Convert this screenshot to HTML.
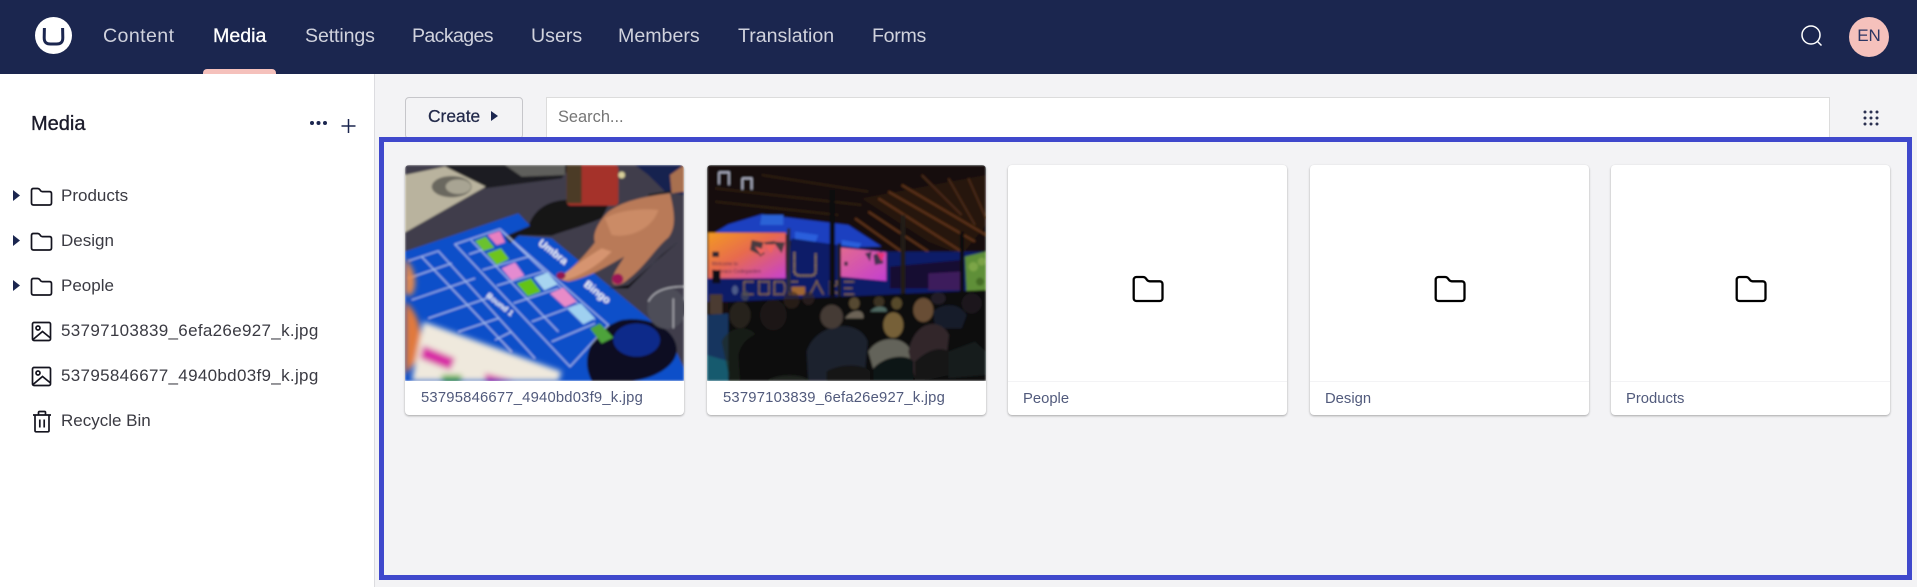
<!DOCTYPE html>
<html lang="en">
<head>
<meta charset="utf-8">
<title>Media</title>
<style>
*{box-sizing:border-box}
html,body{margin:0;padding:0}
body{width:1917px;height:587px;position:relative;overflow:hidden;background:#f3f3f5;font-family:"Liberation Sans",sans-serif}
header{position:absolute;left:0;top:0;width:1917px;height:74px;background:#1b264f}
header a{position:absolute;top:22px;line-height:28px;font-size:19.6px;color:#d0d2dd;text-decoration:none;white-space:nowrap}
header a.on{color:#fff;-webkit-text-stroke:.3px #fff}
.ind{position:absolute;left:203px;top:69px;width:73px;height:5px;background:#f5c1bc;border-radius:4px 4px 0 0}
.en{position:absolute;left:1849px;top:17px;width:40px;height:40px;border-radius:50%;background:#f5c1bc;color:#2b3563;font-size:17px;line-height:37px;text-align:center}
aside{position:absolute;left:0;top:74px;width:375px;height:513px;background:#fff;border-right:1px solid #dcdce0}
aside h1{position:absolute;left:31px;top:37px;margin:0;font-size:20px;line-height:26px;font-weight:400;color:#1b1b2a;-webkit-text-stroke:.35px #1b1b2a}
.row{position:absolute;left:61px;font-size:17px;line-height:24px;color:#3a3a42;white-space:nowrap}
.row.file{letter-spacing:.32px}
.ic{position:absolute}
.create{position:absolute;left:405px;top:97px;width:118px;height:42px;background:#f3f3f5;border:1px solid #c6c6ca;border-radius:4px}
.create span{position:absolute;left:22px;top:6px;font-size:17.4px;line-height:24px;color:#22294a;-webkit-text-stroke:.25px #22294a}
.create i{position:absolute;left:85px;top:13px;width:0;height:0;border-left:7px solid #1b264f;border-top:5px solid transparent;border-bottom:5px solid transparent}
.search{position:absolute;left:546px;top:97px;width:1284px;height:42px;background:#fff;border:1px solid #dcdcdc;border-top-width:1.5px;padding:7px 11px;font-size:16.4px;line-height:24px;color:#757575}
.frame{position:absolute;left:379px;top:137px;width:1533px;height:443px;border:5px solid #3f48cc;z-index:5}
.card{position:absolute;top:165px;width:279px;height:250px;background:#fff;border-radius:4px;box-shadow:0 1px 2px rgba(0,0,0,.32);overflow:hidden}
.card svg.ph{position:absolute;left:0;top:0;width:279px;height:216px;display:block}
.card .lb{position:absolute;left:16px;top:216px;right:0;height:34px;line-height:34px;font-size:14.8px;color:#515a7c;white-space:nowrap}
.card .lb.file{letter-spacing:.2px}
.card.f .lb{border-top:1px solid #f3f3f5;left:0;padding-left:15px}
.card .fd{position:absolute;left:124px;top:110px}
</style>
</head>
<body>
<header>
<svg class="ic" style="left:35px;top:17px" width="37" height="37" viewBox="0 0 37 37"><circle cx="18.500" cy="18.500" r="18.500" fill="#fff"/><path d="M9.400 11 9.200 20.500C9.100 25.500 11.500 27 15.500 27h6c4 0 6.400-1.500 6.300-6.500L27.600 11" fill="none" stroke="#1b264f" stroke-width="3"/></svg>
<a style="left:103px;letter-spacing:.4px">Content</a>
<a class="on" style="left:213px">Media</a>
<a style="left:305px;letter-spacing:-.12px">Settings</a>
<a style="left:412px;letter-spacing:-.65px">Packages</a>
<a style="left:531px">Users</a>
<a style="left:618px">Members</a>
<a style="left:738px">Translation</a>
<a style="left:872px;letter-spacing:-.3px">Forms</a>
<div class="ind"></div>
<svg class="ic" style="left:1800px;top:24px" width="24" height="24" viewBox="0 0 24 24" fill="none" stroke="#fff" stroke-width="1.500"><circle cx="11" cy="11" r="9"/><path d="m17.500 17.500 4 4"/></svg>
<div class="en">EN</div>
</header>

<aside>
<h1>Media</h1>
<svg class="ic" style="left:309px;top:46px" width="19" height="6" viewBox="0 0 19 6" fill="#1b264f"><circle cx="3" cy="3" r="2"/><circle cx="9.500" cy="3" r="2"/><circle cx="16" cy="3" r="2"/></svg>
<svg class="ic" style="left:341px;top:44px" width="15" height="16" viewBox="0 0 15 16" stroke="#1b264f" stroke-width="1.500"><path d="M7.500 1v14M.5 8h14"/></svg>

<svg class="ic" style="left:13px;top:116px" width="8" height="11"><path d="M0 0 7 5.500 0 11z" fill="#1b264f"/></svg>
<svg class="ic" style="left:30px;top:113px" width="23" height="19" viewBox="0 0 23 19"><path d="M3.500 1.500h4.200c1 0 1.600.4 2.200 1.200l.6.900c.5.700 1 1 1.900 1h7.100c1.200 0 2 .8 2 2v9.400c0 1.200-.8 2-2 2h-16c-1.200 0-2-.8-2-2V3.500c0-1.200.8-2 2-2z" fill="none" stroke="#14141f" stroke-width="1.700"/></svg>
<div class="row" style="top:110px">Products</div>

<svg class="ic" style="left:13px;top:161px" width="8" height="11"><path d="M0 0 7 5.500 0 11z" fill="#1b264f"/></svg>
<svg class="ic" style="left:30px;top:158px" width="23" height="19" viewBox="0 0 23 19"><path d="M3.500 1.500h4.200c1 0 1.600.4 2.200 1.200l.6.900c.5.700 1 1 1.900 1h7.100c1.200 0 2 .8 2 2v9.400c0 1.200-.8 2-2 2h-16c-1.200 0-2-.8-2-2V3.500c0-1.200.8-2 2-2z" fill="none" stroke="#14141f" stroke-width="1.700"/></svg>
<div class="row" style="top:155px">Design</div>

<svg class="ic" style="left:13px;top:206px" width="8" height="11"><path d="M0 0 7 5.500 0 11z" fill="#1b264f"/></svg>
<svg class="ic" style="left:30px;top:203px" width="23" height="19" viewBox="0 0 23 19"><path d="M3.500 1.500h4.200c1 0 1.600.4 2.200 1.200l.6.900c.5.700 1 1 1.900 1h7.100c1.200 0 2 .8 2 2v9.400c0 1.200-.8 2-2 2h-16c-1.200 0-2-.8-2-2V3.500c0-1.200.8-2 2-2z" fill="none" stroke="#14141f" stroke-width="1.700"/></svg>
<div class="row" style="top:200px">People</div>

<svg class="ic" style="left:31px;top:247px" width="21" height="21" viewBox="0 0 21 21" fill="none" stroke="#14141f" stroke-width="1.700"><rect x="1.500" y="1.500" width="18" height="18" rx="1.500"/><circle cx="7" cy="7" r="2"/><path d="m2 18.500 9.500-8 8 6.500"/></svg>
<div class="row file" style="top:245px">53797103839_6efa26e927_k.jpg</div>

<svg class="ic" style="left:31px;top:292px" width="21" height="21" viewBox="0 0 21 21" fill="none" stroke="#14141f" stroke-width="1.700"><rect x="1.500" y="1.500" width="18" height="18" rx="1.500"/><circle cx="7" cy="7" r="2"/><path d="m2 18.500 9.500-8 8 6.500"/></svg>
<div class="row file" style="top:290px">53795846677_4940bd03f9_k.jpg</div>

<svg class="ic" style="left:32px;top:336px" width="20" height="23" viewBox="0 0 20 23" fill="none" stroke="#14141f" stroke-width="1.700"><path d="M1 5h18M6.500 5V2.500c0-.7.4-1 1-1h5c.6 0 1 .3 1 1V5M3 5v15.500c0 .8.500 1.300 1.200 1.300h11.600c.7 0 1.200-.5 1.200-1.300V5M7.800 9.500v8M12.200 9.500v8"/></svg>
<div class="row" style="top:335px">Recycle Bin</div>
</aside>

<div class="create"><span>Create</span><i></i></div>
<div class="search">Search...</div>
<svg class="ic" style="left:1863px;top:110px" width="16" height="16" fill="#2a3050"><circle cx="2" cy="2" r="1.500"/><circle cx="8" cy="2" r="1.500"/><circle cx="14" cy="2" r="1.500"/><circle cx="2" cy="8" r="1.500"/><circle cx="8" cy="8" r="1.500"/><circle cx="14" cy="8" r="1.500"/><circle cx="2" cy="14" r="1.500"/><circle cx="8" cy="14" r="1.500"/><circle cx="14" cy="14" r="1.500"/></svg>

<div class="frame"></div>

<!-- Card 1 -->
<div class="card" style="left:405px">
<svg class="ph" viewBox="30 30 837 648" preserveAspectRatio="none">
<defs><filter id="b1" x="-5%" y="-5%" width="110%" height="110%"><feGaussianBlur stdDeviation="3.500"/></filter><filter id="b2"><feGaussianBlur stdDeviation="9"/></filter></defs>
<g filter="url(#b1)">
<rect x="30" y="30" width="837" height="648" fill="#3f3e4c"/>
<path d="M150 30H530L500 70 270 100 180 60z" fill="#1c1b21"/>
<path d="M330 30H510V60L380 65z" fill="#5f5e5c"/>
<path d="M720 30H867V120L810 110 760 60z" fill="#17214f"/>
<path d="M30 60 150 35 272 95 30 232z" fill="#b9b39e"/>
<ellipse cx="170" cy="95" rx="60" ry="32" fill="#6a685e"/>
<ellipse cx="190" cy="95" rx="38" ry="22" fill="#a8a493"/>
<path d="M400 215C420 150 480 130 540 135L640 150 620 190C560 215 500 230 470 242L340 240z" fill="#131217"/>
<rect x="515" y="30" width="155" height="122" rx="12" fill="#a5302a"/>
<rect x="515" y="30" width="45" height="115" fill="#4b3a26"/>
<circle cx="680" cy="60" r="10" fill="#d8cf9a"/>
<path d="M30 290 370 175 405 212 340 240 470 250 760 490 830 560 867 640 867 678H30z" fill="#0d4fc9"/>
<path d="M330 245C370 225 395 220 405 212L345 265z" fill="#15141c"/>
<path d="M590 678C550 600 600 520 680 495 770 480 850 530 845 590 840 640 760 678 700 678z" fill="#0a0e20"/>
<ellipse cx="725" cy="555" rx="70" ry="50" fill="#0b2a8a"/>
<g stroke="#c4d2f4" stroke-width="3.500" fill="none" opacity=".85">
<path d="M180 268 315 222 365 268 640 510 525 635 180 268z"/>
<path d="M222 298 275 280M262 345 400 305M305 392 445 350M355 445 490 400M410 500 545 450M470 560 600 505"/>
<path d="M228 255 490 530M320 228 600 495"/>
<path d="M40 318 130 288 420 610M80 305 350 590M40 370 170 325M50 435 240 370M100 490 290 425M190 530 310 490M300 555 350 530"/>
</g>
<g>
<path d="M240 258 272 245 298 278 265 288z" fill="#6bc22e"/>
<path d="M275 295 318 280 342 312 305 330z" fill="#6ec41c"/>
<path d="M278 240 315 228 330 262 305 270z" fill="#e87fc0"/>
<path d="M320 340 360 322 388 362 350 376z" fill="#e48bd0"/>
<path d="M365 385 408 370 438 410 398 424z" fill="#63c319"/>
<path d="M417 368 458 352 488 388 448 406z" fill="#a7d4f0"/>
<path d="M465 415 505 398 545 440 510 456z" fill="#e88bc8"/>
<path d="M518 462 558 445 600 490 565 508z" fill="#9fd0f0"/>
<path d="M585 520 615 505 655 548 620 565z" fill="#4da33a"/>
</g>
<path d="M480 375 640 400 700 390 850 260 800 300 700 400 640 400z" fill="#09080c"/>
<path d="M490 372C530 345 570 300 600 262 590 235 615 195 640 170 680 140 740 125 825 115 838 170 845 215 820 248 785 275 750 335 700 372 680 392 655 395 652 380 650 360 670 335 688 305 640 330 590 365 520 380z" fill="#b97a58"/>
<path d="M630 190C670 165 740 160 790 165 770 225 700 250 650 240z" fill="#cb8b66"/>
<path d="M490 370C530 340 570 310 620 280L650 290C600 340 550 365 510 375z" fill="#d69470"/>
<ellipse cx="498" cy="362" rx="14" ry="11" fill="#92134f"/>
<ellipse cx="668" cy="372" rx="17" ry="16" fill="#9c1757"/>
<path d="M760 120 840 108" stroke="#1a1a1c" stroke-width="5"/>
<path d="M825 60 867 30V110L830 115z" fill="#a86f4f"/>
<ellipse cx="815" cy="460" rx="58" ry="62" fill="#4e4d58"/>
<path d="M760 440C780 400 830 395 867 395M835 430V520" stroke="#c9c9cf" stroke-width="3" fill="none"/>
<text x="428" y="268" font-family="Liberation Sans,sans-serif" font-weight="700" font-size="32" fill="#fff" transform="rotate(38 428 268)">Umbra</text>
<text x="565" y="392" font-family="Liberation Sans,sans-serif" font-weight="700" font-size="32" fill="#fff" transform="rotate(38 565 392)">Bingo</text>
<text x="272" y="425" font-family="Liberation Sans,sans-serif" font-weight="700" font-size="24" fill="#fff" transform="rotate(38 272 425)">Round 1</text>
</g>
<g filter="url(#b2)">
<path d="M30 310C60 340 70 390 50 420L30 420z" fill="#e58a4e"/>
<path d="M30 440C70 470 90 540 70 610L30 660z" fill="#e0793d"/>
<path d="M85 500 500 650 490 678H50z" fill="#efe9dd"/>
<path d="M85 572 180 610 165 645 75 610z" fill="#d829a5"/>
<path d="M270 655 360 678H270z" fill="#d92ca8"/>
<path d="M140 660H200V678H140z" fill="#5fb02a"/>
</g>
</svg>
<div class="lb file">53795846677_4940bd03f9_k.jpg</div>
</div>

<!-- Card 2 -->
<div class="card" style="left:707px">
<svg class="ph" viewBox="36 30 837 648" preserveAspectRatio="none">
<defs>
<linearGradient id="s1" x1="0" y1="0" x2="1" y2="1"><stop offset="0" stop-color="#f39a22"/><stop offset=".45" stop-color="#e76a4e"/><stop offset="1" stop-color="#c742cf"/></linearGradient>
<linearGradient id="s2" x1="0" y1="0" x2="1" y2="1"><stop offset="0" stop-color="#e26a90"/><stop offset="1" stop-color="#c43ed0"/></linearGradient>
<filter id="c1" x="-5%" y="-5%" width="110%" height="110%"><feGaussianBlur stdDeviation="3.500"/></filter>
</defs>
<g filter="url(#c1)">
<rect x="36" y="30" width="837" height="648" fill="#120e0c"/>
<path d="M500 130 873 60V210L800 300 700 260z" fill="#26150d"/>
<g stroke="#5c3217" stroke-width="7" fill="none"><path d="M550 130 800 290M520 170 700 290M580 110 840 260M620 90 873 240M480 190 620 290"/></g>
<g stroke="#4a2a15" stroke-width="6" fill="none"><path d="M680 60 800 180M760 70 840 210M820 70 873 190"/></g>
<g stroke="#33200f" stroke-width="5" fill="none"><path d="M60 100 500 150M60 140 430 180M200 60 520 110"/></g>
<path d="M72 52h30v38M72 52v36M142 70h28v34M142 70v34" stroke="#c8cbe0" stroke-width="4" fill="none"/>
<path d="M60 232 100 208 200 178 300 190 460 210 560 275 430 278 290 260 270 232z" fill="#1a3fc0"/>
<path d="M200 180H265V210H195z" fill="#2a62d6"/>
<path d="M300 230 370 240 360 265 300 255zM440 255 500 265 490 280 440 275z" fill="#2a5fdc"/>
<path d="M36 370H273L290 250 430 270 580 290 870 290 873 440H36z" fill="#0e1c68"/>
<path d="M585 335 800 315V400H585z" fill="#160d30"/>
<path d="M700 355 795 350V405H700z" fill="#3e1a5c"/>
<rect x="40" y="233" width="232" height="137" fill="url(#s1)"/>
<path d="M170 255 205 262 195 300 165 285zM205 262 240 258 232 285zM235 260 270 262 260 295zM185 280 210 295 195 305z" fill="#4a3a40"/>
<path d="M210 268 240 268 228 295zM180 275 210 285 198 300z" fill="#f0645e"/>
<path d="M438 278 574 292 574 378 438 365z" fill="url(#s2)"/>
<path d="M510 295 530 290 525 320zM535 300 560 290 565 325 540 330z" fill="#43304f"/>
<path d="M545 292 570 295 560 320z" fill="#e8327a"/>
<rect x="52" y="290" width="20" height="16" fill="#2a2530"/>
<rect x="448" y="320" width="10" height="12" fill="#3a2a40"/>
<text x="50" y="332" font-family="Liberation Sans,sans-serif" font-size="15" fill="#5a2a4a">Welcome to</text>
<text x="50" y="354" font-family="Liberation Sans,sans-serif" font-size="15" fill="#5a2a4a">Umbraco Codegarden</text>
<path d="M298 292V348Q298 362 320 362H345Q362 362 362 348V296" stroke="#b8963a" stroke-width="6" stroke-dasharray="4 4" fill="none"/>
<g stroke="#a07c2a" stroke-width="5" stroke-dasharray="4 3" fill="none"><path d="M175 380H147V418H175M192 380H222V418H192zM238 380V418H265Q275 400 265 380zM283 380V418M283 380H310M283 400H305M283 418H310M345 418 365 380 385 418M405 418V380H425Q432 392 405 398L430 418M448 380H478M448 400H472M448 418H478"/></g>
<rect x="404" y="105" width="16" height="320" fill="#0a0a0c"/>
<rect x="276" y="220" width="10" height="190" fill="#2a2a3a"/>
<rect x="428" y="265" width="10" height="160" fill="#1c1a28"/>
<rect x="617" y="180" width="14" height="240" fill="#201b18"/>
<rect x="795" y="230" width="12" height="190" fill="#0e0e0e"/>
<path d="M810 305 873 290V415H815z" fill="#5f8f38"/>
<circle cx="835" cy="335" r="14" fill="#7ca547"/><circle cx="860" cy="320" r="12" fill="#7ca346"/><circle cx="855" cy="380" r="12" fill="#456d26"/>
<rect x="44" y="418" width="38" height="60" fill="#4b3a32"/>
<rect x="52" y="345" width="24" height="40" fill="#111116"/>
<rect x="290" y="395" width="40" height="25" fill="#a06630"/>
<path d="M36 480 100 475 108 678H36z" fill="#16345e"/>
<path d="M36 600 105 620 108 678H36z" fill="#155a6e"/>
<path d="M100 440 873 405V678H100z" fill="#0b0c0e"/>
<g opacity=".6">
<ellipse cx="120" cy="405" rx="9" ry="14" fill="#7a86a0"/>
<ellipse cx="150" cy="422" rx="12" ry="16" fill="#555"/>
<ellipse cx="290" cy="435" rx="24" ry="26" fill="#3a2a20"/>
<ellipse cx="340" cy="430" rx="18" ry="20" fill="#3a2a22"/>
<ellipse cx="478" cy="445" rx="16" ry="18" fill="#8a7048"/>
<path d="M450 490C470 460 510 460 505 490z" fill="#ad9f86"/>
<ellipse cx="552" cy="440" rx="16" ry="16" fill="#5a4834"/>
<path d="M525 470C545 445 580 455 575 470z" fill="#7fa79a"/>
<ellipse cx="605" cy="445" rx="16" ry="18" fill="#8a7040"/>
<ellipse cx="730" cy="430" rx="22" ry="18" fill="#2e2638"/>
<path d="M715 470C740 445 790 440 815 480L800 520H720z" fill="#1e2a40"/>
<ellipse cx="830" cy="445" rx="30" ry="30" fill="#242228"/>
<ellipse cx="135" cy="480" rx="32" ry="40" fill="#3c3326"/>
<path d="M80 560C100 510 170 510 185 545V678H105z" fill="#222b1c"/>
<ellipse cx="235" cy="480" rx="40" ry="46" fill="#241c1a"/>
<path d="M130 600C150 510 280 510 310 570L300 678H135z" fill="#100e0b"/>
<path d="M335 590C360 505 490 485 518 560L510 650 400 678H340z" fill="#2c3444"/>
<ellipse cx="410" cy="485" rx="34" ry="36" fill="#6c5a52"/>
<path d="M520 590C550 540 630 540 648 590L650 640 540 660z" fill="#a09d8d"/>
<ellipse cx="595" cy="510" rx="30" ry="38" fill="#bd9a55"/>
<path d="M640 590C660 490 740 490 762 540L755 600 660 670z" fill="#4d3b40"/>
<ellipse cx="685" cy="465" rx="30" ry="36" fill="#a67a4e"/>
<path d="M395 650C430 625 510 625 525 650V678H395z" fill="#1a221c"/>
<path d="M535 640C570 600 640 595 655 620V678H535z" fill="#151b18"/>
<path d="M660 620C700 580 740 575 762 590V660L680 678H660z" fill="#1a1f1c"/>
<path d="M760 590 840 560 873 590V660L760 670z" fill="#1c2422"/>
<path d="M215 678C250 655 320 655 345 678z" fill="#28332a"/>
</g>
</g>
</svg>
<div class="lb file">53797103839_6efa26e927_k.jpg</div>
</div>

<!-- Card 3 -->
<div class="card f" style="left:1008px">
<svg class="fd" width="32" height="28" viewBox="0 0 32 28"><path d="M4.500 2h6.500c1.500 0 2.300.6 3.100 1.700l.9 1.200c.7 1 1.400 1.400 2.700 1.400h10c1.700 0 2.800 1.100 2.800 2.800v14.100c0 1.700-1.100 2.800-2.800 2.800h-23.200c-1.700 0-2.800-1.100-2.800-2.800V4.800c0-1.700 1.100-2.800 2.800-2.800z" fill="none" stroke="#000" stroke-width="2.300"/></svg>
<div class="lb">People</div>
</div>

<!-- Card 4 -->
<div class="card f" style="left:1310px">
<svg class="fd" width="32" height="28" viewBox="0 0 32 28"><path d="M4.500 2h6.500c1.500 0 2.300.6 3.100 1.700l.9 1.200c.7 1 1.400 1.400 2.700 1.400h10c1.700 0 2.800 1.100 2.800 2.800v14.100c0 1.700-1.100 2.800-2.800 2.800h-23.200c-1.700 0-2.800-1.100-2.800-2.800V4.800c0-1.700 1.100-2.800 2.800-2.800z" fill="none" stroke="#000" stroke-width="2.300"/></svg>
<div class="lb">Design</div>
</div>

<!-- Card 5 -->
<div class="card f" style="left:1611px">
<svg class="fd" width="32" height="28" viewBox="0 0 32 28"><path d="M4.500 2h6.500c1.500 0 2.300.6 3.100 1.700l.9 1.200c.7 1 1.400 1.400 2.700 1.400h10c1.700 0 2.800 1.100 2.800 2.800v14.100c0 1.700-1.100 2.800-2.800 2.800h-23.200c-1.700 0-2.800-1.100-2.800-2.800V4.800c0-1.700 1.100-2.800 2.800-2.800z" fill="none" stroke="#000" stroke-width="2.300"/></svg>
<div class="lb">Products</div>
</div>
</body>
</html>
